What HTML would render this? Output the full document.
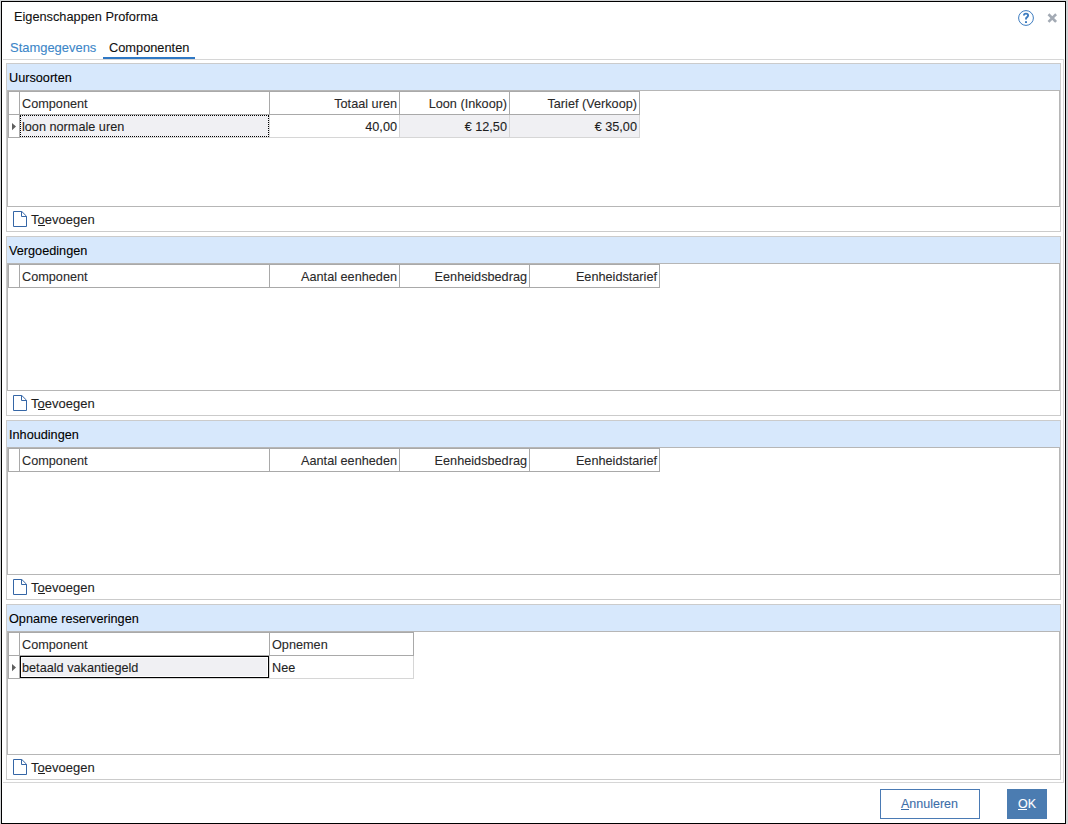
<!DOCTYPE html>
<html><head><meta charset="utf-8">
<style>
*{margin:0;padding:0;box-sizing:border-box}
html,body{width:1068px;height:824px;overflow:hidden;background:#d2d4d6}
body{position:relative;font-family:"Liberation Sans",sans-serif;font-size:13px;color:#1e1e1e}
.a{position:absolute}
.t{white-space:nowrap;line-height:15px;-webkit-text-stroke:0.1px currentColor}
</style></head><body>
<div class="a" style="left:1px;top:1px;width:1065px;height:823px;border:1px solid #000;background:#fff"></div>
<div class="a t" style="left:14px;top:9px;font-size:12.75px;color:#111">Eigenschappen Proforma</div>
<svg class="a" style="left:1017px;top:9px" width="18" height="18" viewBox="0 0 18 18"><circle cx="9" cy="9" r="7.4" fill="none" stroke="#3d7cc0" stroke-width="1"/><path d="M6.9 6.6C6.9 5.3 7.8 4.6 9 4.6C10.2 4.6 11.1 5.3 11.1 6.5C11.1 7.5 10.4 7.9 9.8 8.4C9.2 8.8 9 9.2 9 10V10.6" fill="none" stroke="#3d7cc0" stroke-width="1.9"/><rect x="8" y="12.2" width="2" height="1.8" fill="#3d7cc0"/></svg>
<svg class="a" style="left:1046px;top:12px" width="12" height="12" viewBox="0 0 12 12"><path d="M3.4 3.2L9.2 9M9.2 3.2L3.4 9" stroke="#a3aab4" stroke-width="2.6" stroke-linecap="square"/></svg>
<div class="a t" style="left:10px;top:40px;font-size:12.95px;color:#3c86c8">Stamgegevens</div>
<div class="a t" style="left:109px;top:40px;font-size:12.8px;color:#111">Componenten</div>
<div class="a" style="left:103px;top:57px;width:92px;height:2px;background:#2f78c4"></div>
<div class="a" style="left:3px;top:59px;width:1061px;height:1px;background:#d6d6d6"></div>
<div class="a" style="left:1063px;top:59px;width:1px;height:724px;background:#d6d6d6"></div>
<div class="a" style="left:3px;top:782px;width:1061px;height:1px;background:#d6d6d6"></div>
<div class="a" style="left:6px;top:63px;width:1055px;height:169px;border:1px solid #cbcbcb;background:#fff"></div>
<div class="a" style="left:7px;top:64px;width:1053px;height:26px;background:#d7e8fc"></div>
<div class="a t" style="left:9px;top:71px;font-size:12.7px;color:#000">Uursoorten</div>
<div class="a" style="left:7px;top:90px;width:1053px;height:117px;border:1px solid #b6b6b6"></div>
<div class="a" style="left:8px;top:91px;width:632px;height:1px;background:#a9a9a9"></div>
<div class="a" style="left:8px;top:114px;width:632px;height:1px;background:#a9a9a9"></div>
<div class="a" style="left:8px;top:91px;width:1px;height:24px;background:#a9a9a9"></div>
<div class="a" style="left:19px;top:91px;width:1px;height:24px;background:#a9a9a9"></div>
<div class="a" style="left:269px;top:91px;width:1px;height:24px;background:#a9a9a9"></div>
<div class="a t" style="left:22px;top:97px;font-size:12.7px;color:#2a2a2a">Component</div>
<div class="a" style="left:399px;top:91px;width:1px;height:24px;background:#a9a9a9"></div>
<div class="a t" style="right:671px;top:97px;text-align:right;font-size:12.7px;color:#2a2a2a">Totaal uren</div>
<div class="a" style="left:509px;top:91px;width:1px;height:24px;background:#a9a9a9"></div>
<div class="a t" style="right:561px;top:97px;text-align:right;font-size:12.7px;color:#2a2a2a">Loon (Inkoop)</div>
<div class="a" style="left:639px;top:91px;width:1px;height:24px;background:#a9a9a9"></div>
<div class="a t" style="right:431px;top:97px;text-align:right;font-size:12.7px;color:#2a2a2a">Tarief (Verkoop)</div>
<div class="a" style="left:8px;top:115px;width:1px;height:23px;background:#a9a9a9"></div>
<div class="a" style="left:19px;top:115px;width:1px;height:23px;background:#a9a9a9"></div>
<div class="a" style="left:8px;top:137px;width:12px;height:1px;background:#a9a9a9"></div>
<svg class="a" style="left:12px;top:123px" width="5" height="8" viewBox="0 0 5 8"><path d="M0 0L4 3.6L0 7.2Z" fill="#5f5f5f"/></svg>
<div class="a" style="left:20px;top:115px;width:249px;height:22px;background:#f0f0f3"></div>
<div class="a" style="left:269px;top:115px;width:1px;height:22px;background:#d6d6d6"></div>
<div class="a" style="left:20px;top:137px;width:250px;height:1px;background:#d6d6d6"></div>
<div class="a t" style="left:22px;top:120px;font-size:12.7px">loon normale uren</div>
<div class="a" style="left:399px;top:115px;width:1px;height:22px;background:#d6d6d6"></div>
<div class="a" style="left:270px;top:137px;width:130px;height:1px;background:#d6d6d6"></div>
<div class="a t" style="right:671px;top:120px;text-align:right;font-size:12.7px">40,00</div>
<div class="a" style="left:400px;top:115px;width:109px;height:22px;background:#f0f0f3"></div>
<div class="a" style="left:509px;top:115px;width:1px;height:22px;background:#d6d6d6"></div>
<div class="a" style="left:400px;top:137px;width:110px;height:1px;background:#d6d6d6"></div>
<div class="a t" style="right:561px;top:120px;text-align:right;font-size:12.7px">€ 12,50</div>
<div class="a" style="left:510px;top:115px;width:129px;height:22px;background:#f0f0f3"></div>
<div class="a" style="left:639px;top:115px;width:1px;height:22px;background:#d6d6d6"></div>
<div class="a" style="left:510px;top:137px;width:130px;height:1px;background:#d6d6d6"></div>
<div class="a t" style="right:431px;top:120px;text-align:right;font-size:12.7px">€ 35,00</div>
<div class="a" style="left:20px;top:115px;width:249px;height:22px;border:1px dotted #000"></div>
<svg class="a" style="left:13px;top:211px" width="14" height="16" viewBox="0 0 14 16"><path d="M0.5 0.5H8.8L13.5 5.2V15.5H0.5Z M8.5 0.5V5.5H13.5" fill="none" stroke="#3566a6" stroke-width="1"/></svg>
<div class="a t" style="left:31px;top:212px;font-size:13px">Toevoegen</div>
<div class="a" style="left:38px;top:225px;width:7px;height:1px;background:#1e1e1e"></div>
<div class="a" style="left:6px;top:236px;width:1055px;height:180px;border:1px solid #cbcbcb;background:#fff"></div>
<div class="a" style="left:7px;top:237px;width:1053px;height:26px;background:#d7e8fc"></div>
<div class="a t" style="left:9px;top:244px;font-size:12.7px;color:#000">Vergoedingen</div>
<div class="a" style="left:7px;top:263px;width:1053px;height:128px;border:1px solid #b6b6b6"></div>
<div class="a" style="left:8px;top:264px;width:652px;height:1px;background:#a9a9a9"></div>
<div class="a" style="left:8px;top:287px;width:652px;height:1px;background:#a9a9a9"></div>
<div class="a" style="left:8px;top:264px;width:1px;height:24px;background:#a9a9a9"></div>
<div class="a" style="left:19px;top:264px;width:1px;height:24px;background:#a9a9a9"></div>
<div class="a" style="left:269px;top:264px;width:1px;height:24px;background:#a9a9a9"></div>
<div class="a t" style="left:22px;top:270px;font-size:12.7px;color:#2a2a2a">Component</div>
<div class="a" style="left:399px;top:264px;width:1px;height:24px;background:#a9a9a9"></div>
<div class="a t" style="right:671px;top:270px;text-align:right;font-size:12.7px;color:#2a2a2a">Aantal eenheden</div>
<div class="a" style="left:529px;top:264px;width:1px;height:24px;background:#a9a9a9"></div>
<div class="a t" style="right:541px;top:270px;text-align:right;font-size:12.7px;color:#2a2a2a">Eenheidsbedrag</div>
<div class="a" style="left:659px;top:264px;width:1px;height:24px;background:#a9a9a9"></div>
<div class="a t" style="right:411px;top:270px;text-align:right;font-size:12.7px;color:#2a2a2a">Eenheidstarief</div>
<svg class="a" style="left:13px;top:395px" width="14" height="16" viewBox="0 0 14 16"><path d="M0.5 0.5H8.8L13.5 5.2V15.5H0.5Z M8.5 0.5V5.5H13.5" fill="none" stroke="#3566a6" stroke-width="1"/></svg>
<div class="a t" style="left:31px;top:396px;font-size:13px">Toevoegen</div>
<div class="a" style="left:38px;top:409px;width:7px;height:1px;background:#1e1e1e"></div>
<div class="a" style="left:6px;top:420px;width:1055px;height:180px;border:1px solid #cbcbcb;background:#fff"></div>
<div class="a" style="left:7px;top:421px;width:1053px;height:26px;background:#d7e8fc"></div>
<div class="a t" style="left:9px;top:428px;font-size:12.7px;color:#000">Inhoudingen</div>
<div class="a" style="left:7px;top:447px;width:1053px;height:128px;border:1px solid #b6b6b6"></div>
<div class="a" style="left:8px;top:448px;width:652px;height:1px;background:#a9a9a9"></div>
<div class="a" style="left:8px;top:471px;width:652px;height:1px;background:#a9a9a9"></div>
<div class="a" style="left:8px;top:448px;width:1px;height:24px;background:#a9a9a9"></div>
<div class="a" style="left:19px;top:448px;width:1px;height:24px;background:#a9a9a9"></div>
<div class="a" style="left:269px;top:448px;width:1px;height:24px;background:#a9a9a9"></div>
<div class="a t" style="left:22px;top:454px;font-size:12.7px;color:#2a2a2a">Component</div>
<div class="a" style="left:399px;top:448px;width:1px;height:24px;background:#a9a9a9"></div>
<div class="a t" style="right:671px;top:454px;text-align:right;font-size:12.7px;color:#2a2a2a">Aantal eenheden</div>
<div class="a" style="left:529px;top:448px;width:1px;height:24px;background:#a9a9a9"></div>
<div class="a t" style="right:541px;top:454px;text-align:right;font-size:12.7px;color:#2a2a2a">Eenheidsbedrag</div>
<div class="a" style="left:659px;top:448px;width:1px;height:24px;background:#a9a9a9"></div>
<div class="a t" style="right:411px;top:454px;text-align:right;font-size:12.7px;color:#2a2a2a">Eenheidstarief</div>
<svg class="a" style="left:13px;top:579px" width="14" height="16" viewBox="0 0 14 16"><path d="M0.5 0.5H8.8L13.5 5.2V15.5H0.5Z M8.5 0.5V5.5H13.5" fill="none" stroke="#3566a6" stroke-width="1"/></svg>
<div class="a t" style="left:31px;top:580px;font-size:13px">Toevoegen</div>
<div class="a" style="left:38px;top:593px;width:7px;height:1px;background:#1e1e1e"></div>
<div class="a" style="left:6px;top:604px;width:1055px;height:176px;border:1px solid #cbcbcb;background:#fff"></div>
<div class="a" style="left:7px;top:605px;width:1053px;height:26px;background:#d7e8fc"></div>
<div class="a t" style="left:9px;top:612px;font-size:12.7px;color:#000">Opname reserveringen</div>
<div class="a" style="left:7px;top:631px;width:1053px;height:124px;border:1px solid #b6b6b6"></div>
<div class="a" style="left:8px;top:632px;width:406px;height:1px;background:#a9a9a9"></div>
<div class="a" style="left:8px;top:655px;width:406px;height:1px;background:#a9a9a9"></div>
<div class="a" style="left:8px;top:632px;width:1px;height:24px;background:#a9a9a9"></div>
<div class="a" style="left:19px;top:632px;width:1px;height:24px;background:#a9a9a9"></div>
<div class="a" style="left:269px;top:632px;width:1px;height:24px;background:#a9a9a9"></div>
<div class="a t" style="left:22px;top:638px;font-size:12.7px;color:#2a2a2a">Component</div>
<div class="a" style="left:413px;top:632px;width:1px;height:24px;background:#a9a9a9"></div>
<div class="a t" style="left:272px;top:638px;font-size:12.7px;color:#2a2a2a">Opnemen</div>
<div class="a" style="left:8px;top:656px;width:1px;height:23px;background:#a9a9a9"></div>
<div class="a" style="left:19px;top:656px;width:1px;height:23px;background:#a9a9a9"></div>
<div class="a" style="left:8px;top:678px;width:12px;height:1px;background:#a9a9a9"></div>
<svg class="a" style="left:12px;top:664px" width="5" height="8" viewBox="0 0 5 8"><path d="M0 0L4 3.6L0 7.2Z" fill="#5f5f5f"/></svg>
<div class="a" style="left:20px;top:656px;width:249px;height:22px;background:#f0f0f3"></div>
<div class="a" style="left:269px;top:656px;width:1px;height:22px;background:#d6d6d6"></div>
<div class="a" style="left:20px;top:678px;width:250px;height:1px;background:#d6d6d6"></div>
<div class="a t" style="left:22px;top:661px;font-size:12.7px">betaald vakantiegeld</div>
<div class="a" style="left:413px;top:656px;width:1px;height:22px;background:#d6d6d6"></div>
<div class="a" style="left:270px;top:678px;width:144px;height:1px;background:#d6d6d6"></div>
<div class="a t" style="left:272px;top:661px;font-size:12.7px">Nee</div>
<div class="a" style="left:20px;top:656px;width:249px;height:22px;border:1px solid #000;box-shadow:inset 0 0 0 1px #fff"></div>
<svg class="a" style="left:13px;top:759px" width="14" height="16" viewBox="0 0 14 16"><path d="M0.5 0.5H8.8L13.5 5.2V15.5H0.5Z M8.5 0.5V5.5H13.5" fill="none" stroke="#3566a6" stroke-width="1"/></svg>
<div class="a t" style="left:31px;top:760px;font-size:13px">Toevoegen</div>
<div class="a" style="left:38px;top:773px;width:7px;height:1px;background:#1e1e1e"></div>
<div class="a" style="left:880px;top:789px;width:100px;height:30px;border:1px solid #4a7ab4;background:#fff"></div>
<div class="a t" style="left:901px;top:797px;font-size:12.5px;color:#3d6ea8">Annuleren</div>
<div class="a" style="left:901px;top:809px;width:8px;height:1px;background:#3d6ea8"></div>
<div class="a" style="left:1007px;top:789px;width:40px;height:30px;background:#4b7cb1"></div>
<div class="a t" style="left:1018px;top:797px;font-size:12.5px;color:#fff">OK</div>
<div class="a" style="left:1018px;top:809px;width:9px;height:1px;background:#fff"></div>
</body></html>
